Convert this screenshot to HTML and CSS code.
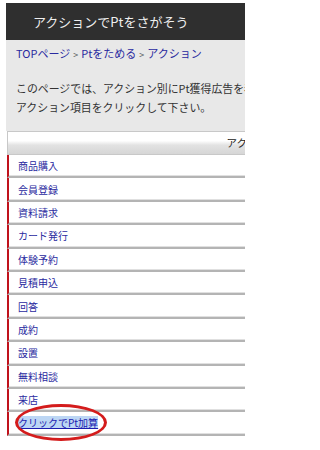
FILE: index.html
```html
<!DOCTYPE html>
<html lang="ja">
<head>
<meta charset="utf-8">
<title>アクションでPtをさがそう</title>
<link rel="stylesheet" href="styles.css">
</head>
<body>
<div class="page">
  <header class="head"><h1 class="title">アクションでPtをさがそう</h1></header>
  <section class="intro">
    <p class="crumbs"><a href="#">TOPページ</a><span class="sep">&gt;</span><a href="#">Ptをためる</a><span class="sep">&gt;</span><a href="#">アクション</a></p>
    <p class="desc"><span class="line">このページでは、アクション別にPt獲得広告を表示します。</span><span class="line">アクション項目をクリックして下さい。</span></p>
  </section>
  <div class="list">
    <div class="list-head">アクション</div>
    <ul class="rows">
      <li class="row"><a href="#">商品購入</a></li>
      <li class="row"><a href="#">会員登録</a></li>
      <li class="row"><a href="#">資料請求</a></li>
      <li class="row"><a href="#">カード発行</a></li>
      <li class="row"><a href="#">体験予約</a></li>
      <li class="row"><a href="#">見積申込</a></li>
      <li class="row"><a href="#">回答</a></li>
      <li class="row"><a href="#">成約</a></li>
      <li class="row"><a href="#">設置</a></li>
      <li class="row"><a href="#">無料相談</a></li>
      <li class="row"><a href="#">来店</a></li>
      <li class="row"><a href="#" class="selected">クリックでPt加算</a></li>
    </ul>
  </div>
  <div class="circle"></div>
</div>
</body>
</html>
```
FILE: styles.css
```css
html, body {
  margin: 0;
  padding: 0;
  background: #ffffff;
}
body {
  font-family: "Noto Sans CJK JP", "DejaVu Sans", sans-serif;
  overflow: hidden;
}
.page {
  position: relative;
  width: 245px;
  height: 450px;
  overflow: hidden;
  padding: 3px 0 0 6px;
  box-sizing: border-box;
}
.head {
  background: #2f2f2f;
  height: 37px;
  display: flex;
  align-items: center;
  padding-left: 27px;
  width: 600px;
}
.title {
  margin: 0;
  font-size: 13px;
  font-weight: normal;
  color: #eeeeee;
  line-height: 16px;
  white-space: nowrap;
}
.intro {
  background: #e8e8e8;
  height: 91px;
  box-sizing: border-box;
  padding: 6px 0 0 10px;
  width: 600px;
}
.crumbs {
  margin: 0;
  font-size: 11px;
  line-height: 14px;
  color: #555;
  white-space: nowrap;
}
.crumbs a {
  color: #2a2aa0;
  text-decoration: none;
}
.sep {
  font-size: 9px;
  color: #555;
  margin: 0 3px;
}
.desc {
  margin: 17px 0 0 0;
  font-size: 10.9px;
  line-height: 19px;
  color: #333;
}
.line {
  display: block;
  white-space: nowrap;
}
.list {
  width: 490px;
  margin-left: 1px;
  background: #fff;
}
.list-head {
  height: 22px;
  line-height: 22px;
  font-size: 10.5px;
  color: #222;
  text-align: center;
  border: 1px solid #c8c8c8;
  border-right: none;
  background: linear-gradient(#ffffff 0%, #ffffff 40%, #e2e2e2 60%, #d6d6d6 100%);
}
.rows {
  list-style: none;
  margin: 0;
  padding: 0;
}
.row {
  height: 21.4px;
  display: flex;
  align-items: center;
  padding-left: 9px;
  border-left: 2px solid #c0121c;
  border-bottom: 2px solid #b4b4b4;
  box-shadow: 0 -1px 0 #e0e0e0 inset;
  font-size: 10px;
}
.row a {
  color: #2a2aa0;
  text-decoration: none;
  line-height: 13px;
}
.row a.selected {
  text-decoration: underline;
  background: #bcd6f4;
  color: #1c1cb0;
}
.circle {
  position: absolute;
  left: 15px;
  top: 404px;
  width: 86px;
  height: 31px;
  border: 3px solid #d41c1c;
  border-radius: 50%;
  pointer-events: none;
}
```
